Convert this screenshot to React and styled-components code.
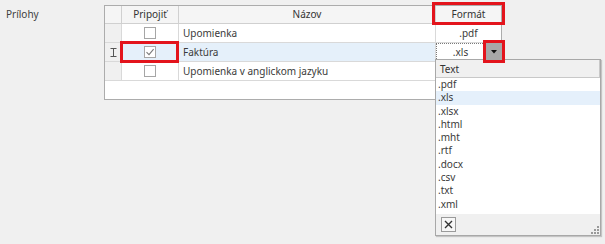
import React from 'react';
import styled, { createGlobalStyle } from 'styled-components';

const GlobalStyle = createGlobalStyle`
  html, body {
    margin: 0;
    padding: 0;
    background: #f0f0f0;
  }
  body {
    font-family: "Noto Sans", "Liberation Sans", sans-serif;
    font-size: 10px;
    color: #3a3a3a;
  }
`;

const Page = styled.div`
  position: relative;
  display: flex;
  width: 605px;
  height: 244px;
  padding-top: 5px;
  box-sizing: border-box;
`;

const Label = styled.div`
  width: 104px;
  padding: 3px 0 0 6px;
  box-sizing: border-box;
  line-height: 13px;
  color: #404040;
`;

const Grid = styled.div`
  width: 398px;
  height: 95px;
  box-sizing: border-box;
  border: 1px solid #acacac;
  background: #fff;
  align-self: flex-start;
`;

const Row = styled.div`
  display: flex;
  height: ${p => p.$h}px;
`;

const Cell = styled.div`
  position: relative;
  box-sizing: border-box;
  width: ${p => p.$w}px;
  flex: none;
  display: flex;
  align-items: center;
  justify-content: ${p => (p.$center ? 'center' : 'flex-start')};
  padding-left: ${p => (p.$center ? 0 : 4)}px;
  border-right: ${p => (p.$last ? 'none' : '1px solid #d9d9d9')};
  border-bottom: 1px solid #d9d9d9;
  background: ${p => p.$bg || '#fff'};
  white-space: nowrap;
  line-height: 13px;
`;

const HeadCell = styled(Cell)`
  color: #333;
  background: #f5f5f5;
  border-color: #d0d0d0;
`;

const Focus = styled.div`
  position: absolute;
  inset: 0 0 0 0;
  border: 1px dotted #7a7a7a;
  pointer-events: none;
`;

const FmtText = styled.span`
  flex: 1;
  text-align: center;
  padding-right: 16px;
`;

const DropButton = styled.div`
  position: absolute;
  right: -1px;
  top: 0;
  width: 16px;
  height: 17px;
  background: #a8a8a8;
  display: flex;
  align-items: center;
  justify-content: center;
`;

const Mark = styled.div`
  position: absolute;
  left: ${p => p.$l}px;
  top: ${p => p.$t}px;
  right: ${p => p.$r}px;
  bottom: ${p => p.$b}px;
  border: 3px solid #e3141c;
  pointer-events: none;
  z-index: 3;
`;

const Box = styled.div`
  width: 12px;
  height: 12px;
  box-sizing: border-box;
  border: 1px solid #a6a6a6;
  background: #fff;
  display: flex;
  align-items: center;
  justify-content: center;
`;

const Popup = styled.div`
  position: absolute;
  left: 435px;
  top: 59px;
  width: 166px;
  height: 177px;
  box-sizing: border-box;
  border: 1px solid #a8a8a8;
  background: #fff;
  box-shadow: 1px 1px 1px rgba(0, 0, 0, 0.18);
  display: flex;
  flex-direction: column;
  z-index: 2;
`;

const PopHead = styled.div`
  height: 18px;
  box-sizing: border-box;
  background: #f0f0f0;
  border-right: 1px solid #c8c8c8;
  border-bottom: 1px solid #c8c8c8;
  padding-left: 4px;
  display: flex;
  align-items: center;
  color: #333;
`;

const List = styled.div`
  flex: 1;
`;

const Item = styled.div`
  height: 13.3px;
  line-height: 13px;
  padding-left: 2px;
  background: ${p => (p.$active ? '#e5f0fb' : 'transparent')};
  color: #3a3a3a;
`;

const Footer = styled.div`
  position: relative;
  height: 21px;
  background: #f0f0f0;
  display: flex;
  align-items: center;
  padding-left: 5px;
`;

const CloseBtn = styled.div`
  width: 15px;
  height: 15px;
  box-sizing: border-box;
  border: 1px solid #9a9a9a;
  background: #f7f7f7;
  display: flex;
  align-items: center;
  justify-content: center;
`;

const Grip = styled.svg`
  position: absolute;
  right: 1px;
  bottom: 1px;
`;

const rows = [
  { checked: false, name: 'Upomienka', fmt: '.pdf' },
  { checked: true, name: 'Faktúra', fmt: '.xls', current: true },
  { checked: false, name: 'Upomienka v anglickom jazyku', fmt: '' },
];

const formats = ['.pdf', '.xls', '.xlsx', '.html', '.mht', '.rtf', '.docx', '.csv', '.txt', '.xml'];

const Check = () => (
  <svg width="10" height="10" viewBox="0 0 10 10">
    <path d="M1.5 5.2 L4 7.6 L8.6 2.2" fill="none" stroke="#7a7a7a" strokeWidth="1.1" />
  </svg>
);

const IBeam = () => (
  <svg width="7" height="9" viewBox="0 0 7 9">
    <path d="M0.5 0.5 H6.5 M3.5 0.5 V8.5 M0.5 8.5 H6.5" fill="none" stroke="#555" strokeWidth="1" />
  </svg>
);

function App() {
  return (
    <Page>
      <GlobalStyle />
      <Label>Prílohy</Label>
      <Grid>
        <Row $h={18}>
          <HeadCell $w={17} $bg="#f0f0f0" />
          <HeadCell $w={57} $center>Pripojiť</HeadCell>
          <HeadCell $w={257} $center>Názov</HeadCell>
          <HeadCell $w={65} $center $last>
            Formát
            <Mark $l={-4} $t={-4} $r={-4} $b={-2} />
          </HeadCell>
        </Row>
        {rows.map((r, i) => {
          const bg = r.current ? '#e5f0fa' : '#fff';
          return (
            <Row key={i} $h={19}>
              <Cell $w={17} $center $bg="#f0f0f0">
                {r.current && <IBeam />}
              </Cell>
              <Cell $w={57} $center $bg={bg}>
                <Box>{r.checked && <Check />}</Box>
                {r.current && <Mark $l={-2} $t={-2} $r={-1} $b={-2} />}
              </Cell>
              <Cell $w={257} $bg={bg}>{r.name}</Cell>
              <Cell $w={65} $center $last>
                {r.current ? (
                  <>
                    <Focus />
                    <FmtText>{r.fmt}</FmtText>
                    <DropButton>
                      <svg width="6" height="4" viewBox="0 0 6 4">
                        <path d="M0 0 H6 L3 3.5 Z" fill="#111" />
                      </svg>
                      <Mark $l={-3} $t={-3} $r={-3} $b={-3} />
                    </DropButton>
                  </>
                ) : (
                  r.fmt
                )}
              </Cell>
            </Row>
          );
        })}
      </Grid>
      <Popup>
        <PopHead>Text</PopHead>
        <List>
          {formats.map(f => (
            <Item key={f} $active={f === '.xls'}>{f}</Item>
          ))}
        </List>
        <Footer>
          <CloseBtn>
            <svg width="9" height="9" viewBox="0 0 9 9">
              <path d="M1 1 L8 8 M8 1 L1 8" stroke="#333" strokeWidth="1.4" />
            </svg>
          </CloseBtn>
          <Grip width="8" height="8" viewBox="0 0 8 8">
            <rect x="6" y="0" width="2" height="2" fill="#9a9a9a" />
            <rect x="3" y="3" width="2" height="2" fill="#9a9a9a" />
            <rect x="6" y="3" width="2" height="2" fill="#9a9a9a" />
            <rect x="0" y="6" width="2" height="2" fill="#9a9a9a" />
            <rect x="3" y="6" width="2" height="2" fill="#9a9a9a" />
            <rect x="6" y="6" width="2" height="2" fill="#9a9a9a" />
          </Grip>
        </Footer>
      </Popup>
    </Page>
  );
}

export default App;
